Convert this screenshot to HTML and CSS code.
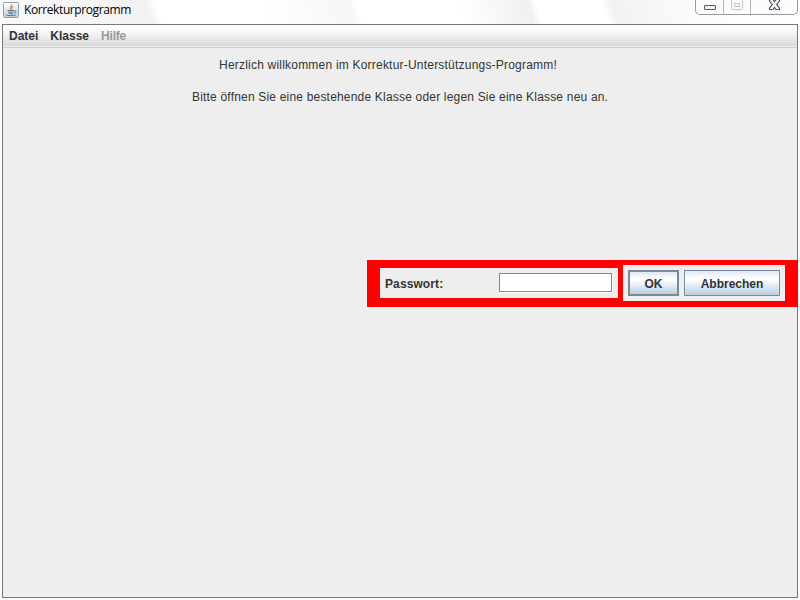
FILE: index.html
```html
<!DOCTYPE html>
<html lang="de">
<head>
<meta charset="utf-8">
<title>Korrekturprogramm</title>
<link rel="stylesheet" href="styles.css">
</head>
<body>
<div class="window">
  <header class="titlebar">
    <svg class="app-icon" width="16" height="16" viewBox="0 0 16 16" fill="none">
      <defs><linearGradient id="tile" x1="0" y1="0" x2="0" y2="1"><stop stop-color="#fff"/><stop offset="1" stop-color="#c3d0dc"/></linearGradient></defs>
      <rect x=".5" y=".5" width="15" height="15" rx="1" fill="url(#tile)" stroke="#8b9fb0"/>
      <path d="M8.600 2C9.600 4 6 4.800 7.500 7.800M10.500 4.200C8.500 5 8.200 6 9.300 7.800" stroke="#e88b3c" stroke-width="1.200"/>
      <path d="M4.500 8.500H11M5 10.200H10.500M6 11.800H10M3 12.800C5 14 10 14 13 12.800M11.300 8.800C14 8 13.500 10.500 11 11" stroke="#52758f"/>
    </svg>
    <h1 class="title">Korrekturprogramm</h1>
    <div class="controls">
      <span class="control"><svg width="27" height="14" viewBox="0 0 27 14"><rect x="8.500" y="5.500" width="11" height="4" rx=".5" fill="#f4f4f6" stroke="#55566a"/></svg></span>
      <span class="control"><svg width="26" height="14" viewBox="0 0 26 14" fill="none" stroke="#c4c4c4"><rect x="7.500" y="-.5" width="11" height="10" rx="1"/><rect x="10.500" y="3.500" width="5" height="3"/></svg></span>
      <span class="control"><svg width="47" height="14" viewBox="0 0 47 14"><path d="M18.500-.5H22L23.500 1.500L25-.5H28.500V1L25.700 4.500L28.500 8V9.500H25L23.500 7.500L22 9.500H18.500V8L21.300 4.500L18.500 1Z" fill="#f6f6f8" stroke="#505166" stroke-width="1.200"/></svg></span>
    </div>
  </header>
  <main class="frame">
    <nav class="menubar">
      <span class="menu datei">Datei</span>
      <span class="menu klasse">Klasse</span>
      <span class="menu hilfe">Hilfe</span>
    </nav>
    <section class="welcome">
      <p class="greeting">Herzlich willkommen im Korrektur-Unterstützungs-Programm!</p>
      <p class="hint">Bitte öffnen Sie eine bestehende Klasse oder legen Sie eine Klasse neu an.</p>
    </section>
    <form class="login">
      <div class="field-panel">
        <label class="label" for="password">Passwort:</label>
        <input class="password" id="password" type="password">
      </div>
      <div class="button-panel">
        <button class="button ok" type="button">OK</button>
        <button class="button cancel" type="button">Abbrechen</button>
      </div>
    </form>
  </main>
</div>
</body>
</html>
```
FILE: styles.css
```css
* { box-sizing: border-box; }
body { margin: 0; overflow: hidden; background: #fff; color: #333; font: 12px "Liberation Sans", Arial, sans-serif; }
.window {
  display: flex;
  flex-direction: column;
  width: 800px;
  height: 600px;
  padding: 0 2px 2px;
  background: #fafafa;
}
.titlebar {
  display: flex;
  flex: none;
  height: 24px;
  margin: 0 -2px;
  padding: 0 2px;
  background: linear-gradient(72deg, #fafafa 0, #f2f2f2 145px, #fff 155px, #fff 255px, #f6f6f6 338px, #fff 346px, #fff 442px, #f0f0f0 508px, #fff 516px, #fff 579px, #f2f2f2 588px, #fcfcfc 670px, #fff);
}
.app-icon { flex: none; margin: 2px 0 0 1px; }
.title { margin: 0 0 0 5px; color: #000; font: 12px/20px "Open Sans", sans-serif; letter-spacing: -.4px; }
.controls { display: flex; height: 15px; width: 103px; margin-left: auto; border: 1px solid #999; border-top: 0; border-radius: 0 0 5px 5px; background: #fcfcfc; overflow: hidden; }
.control { flex: none; height: 14px; border-right: 1px solid #b5b5b5; }
.control:last-child { border: 0; }
.control svg { display: block; }
.frame { flex: 1; display: flex; flex-direction: column; border: 1px solid #777; background: #eee; }
.menubar { display: flex; flex: none; height: 23px; padding-left: 6px; gap: 12px; border-bottom: 1px solid #ccc; background: linear-gradient(#fff 0, #fff 2px, #dadada 21px, #eee 21px); font-weight: bold; line-height: 23px; }
.hilfe { color: #999; letter-spacing: -.2px; }
.welcome { flex: none; height: 212px; padding-top: 9px; }
.welcome p { margin: 0; line-height: 16px; white-space: nowrap; }
.greeting { padding-left: 216px; letter-spacing: .21px; }
.welcome .hint { margin-top: 16px; padding-left: 189px; letter-spacing: .19px; }
.login { display: flex; align-items: flex-start; flex: none; width: 431px; height: 47px; margin: 0 -1px 0 auto; padding: 5px 13px 0; gap: 5px; background: #f00; }
.field-panel { display: flex; align-items: flex-start; justify-content: space-between; width: 238px; height: 30px; margin-top: 3px; padding: 5px 6px 0 5px; background: #eee; }
.label { font-weight: bold; line-height: 23px; letter-spacing: .1px; }
.password { width: 113px; height: 19px; padding: 0 2px; border: 1px solid #7a8a99; border-radius: 0; background: #fff; box-shadow: 1px 1px #fff; outline: 0; }
.button-panel { display: flex; gap: 5px; width: 162px; height: 36px; padding: 5px; background: #eee; }
.button { height: 26px; padding: 2px 0 0; border: 1px solid #7a8a99; background: linear-gradient(#dde8f3 0, #fff 30%, #fff 35%, #b8cfe5 100%); color: #333; font: bold 12px "Liberation Sans", Arial, sans-serif; }
.ok { width: 51px; border-width: 2px; }
.cancel { width: 96px; }
```
